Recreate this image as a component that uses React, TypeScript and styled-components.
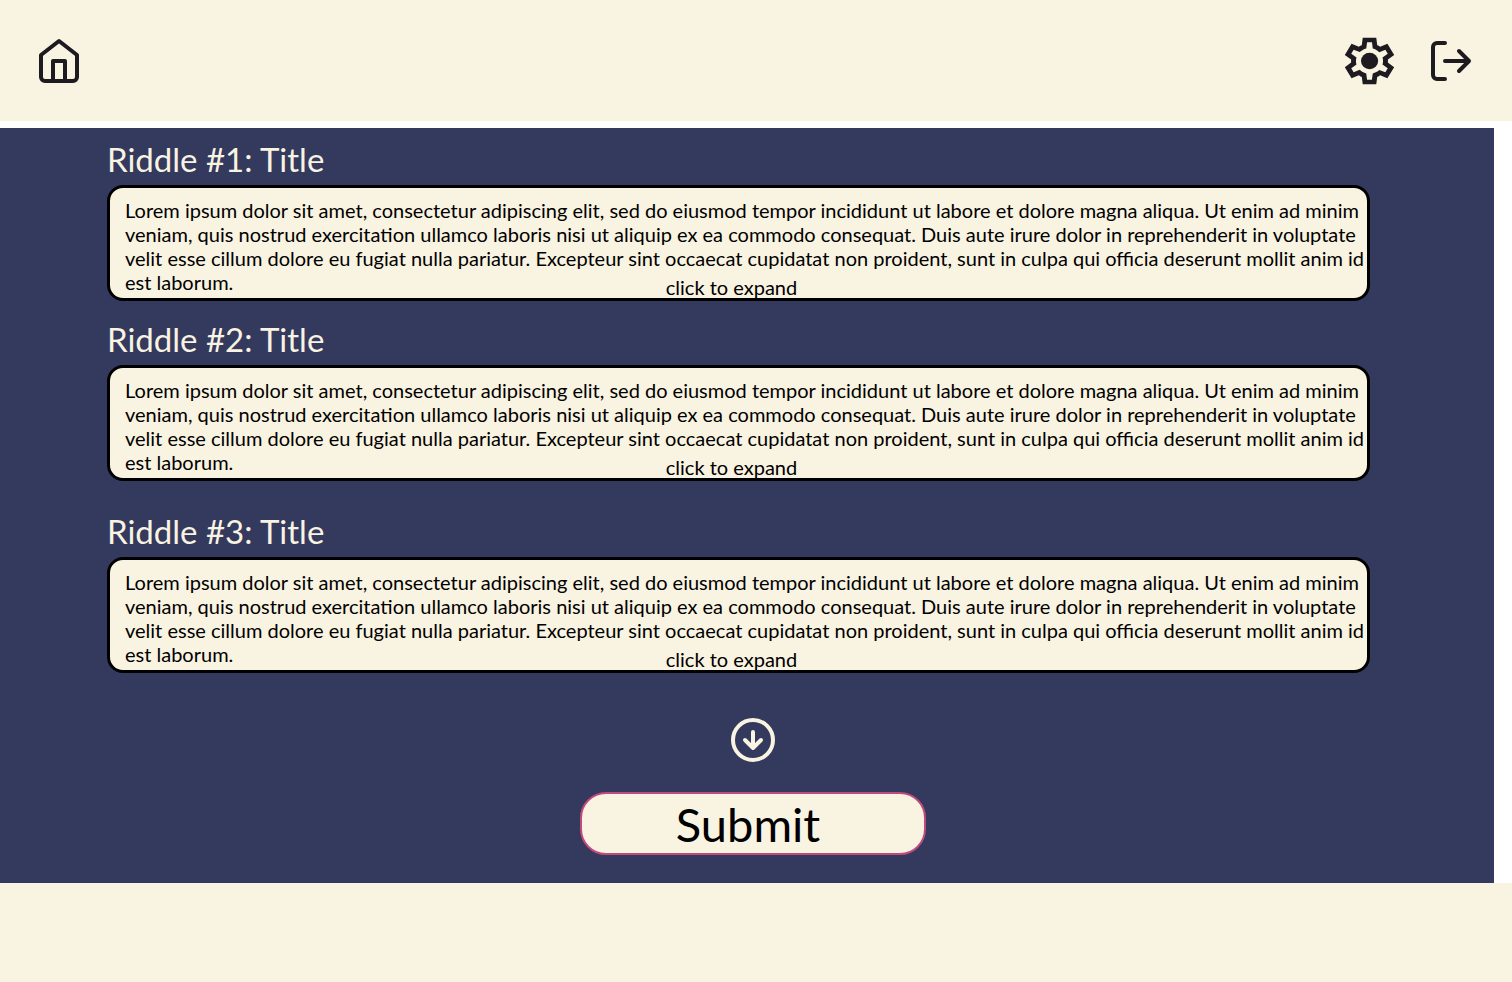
import React from "react";
import styled, { createGlobalStyle } from "styled-components";

const cream = "#f9f3e1";
const navy = "#34395e";
const ink = "#1d1b20";

const GlobalStyle = createGlobalStyle`
  *, *::before, *::after { box-sizing: border-box; }
  body {
    margin: 0;
    background: #ffffff;
    color: #000000;
    font-family: Lato, "Noto Sans", sans-serif;
  }
`;

const Page = styled.div`
  display: flex;
  flex-direction: column;
  min-height: 100vh;
`;

const Header = styled.header`
  display: flex;
  align-items: center;
  justify-content: space-between;
  height: 121px;
  padding: 0 36px 0 35px;
  background: ${cream};
`;

const HeaderActions = styled.div`
  display: flex;
  align-items: center;
  gap: 29px;
`;

const HomeLink = styled.a`
  display: flex;
  color: ${ink};
`;

const IconButton = styled.button<{ $color: string }>`
  display: flex;
  padding: 0;
  border: 0;
  background: none;
  color: ${(p) => p.$color};
  cursor: pointer;
`;

const Main = styled.main`
  margin: 7px 18px 0 0;
  padding: 11px 0 28px;
  background: ${navy};
`;

const RiddleList = styled.div`
  padding: 0 124px 0 107px;
`;

const Riddle = styled.section<{ $gap: number }>`
  margin-top: ${(p) => p.$gap}px;
`;

const RiddleTitle = styled.h2`
  margin: 0 0 6px;
  color: ${cream};
  font-size: 33px;
  line-height: 40px;
  font-weight: 400;
`;

const RiddleCard = styled.div`
  position: relative;
  min-height: 116px;
  padding: 10px 0 0 15px;
  border: 3px solid #000000;
  border-radius: 16px;
  background: ${cream};
`;

const RiddleText = styled.p`
  margin: 0;
  font-size: 20px;
  line-height: 24px;
  white-space: pre-line;
`;

const ExpandButton = styled.button`
  position: absolute;
  left: 0;
  right: 14px;
  bottom: -1px;
  width: max-content;
  margin: 0 auto;
  padding: 0;
  border: 0;
  background: none;
  color: inherit;
  font: inherit;
  font-size: 20px;
  line-height: 24px;
  cursor: pointer;
`;

const Actions = styled.div`
  display: flex;
  flex-direction: column;
  align-items: center;
  gap: 28px;
  margin-top: 43px;
  padding-left: 12px;
`;

const SubmitButton = styled.button`
  width: 346px;
  height: 63px;
  padding: 0 10px 0 0;
  border: 2px solid #c04a7c;
  border-radius: 26px;
  background: ${cream};
  color: #000000;
  font-family: inherit;
  font-size: 47px;
  line-height: 56px;
  cursor: pointer;
`;

const Footer = styled.footer`
  flex: 1;
  min-height: 99px;
  background: ${cream};
`;

const HomeIcon = () => (
  <svg width="48" height="48" viewBox="0 0 48 48" fill="none" stroke="currentColor" strokeWidth="4" strokeLinejoin="round" aria-hidden="true">
    <path d="M6 18 24 4l18 14v22a4 4 0 0 1-4 4H10a4 4 0 0 1-4-4Z" />
    <path d="M18 44V24h12v20" />
  </svg>
);

const SettingsIcon = () => (
  <svg width="59" height="56" viewBox="0 -960 960 960" preserveAspectRatio="none" fill="currentColor" aria-hidden="true">
    <path d="m370-80-16-128q-13-5-24.500-12T307-235l-119 50L78-375l103-78q-1-7-1-13.500v-27q0-6.500 1-13.500L78-585l110-190 119 50q11-8 23-15t24-12l16-128h220l16 128q13 5 24.500 12t22.500 15l119-50 110 190-103 78q1 7 1 13.500v27q0 6.500-2 13.500l103 78-110 190-118-50q-11 8-23 15t-24 12L590-80H370Zm70-80h79l14-106q31-8 57.500-23.500T639-327l99 41 39-68-86-65q5-14 7-29.500t2-31.500q0-16-2-31.500t-7-29.500l86-65-39-68-99 42q-22-23-48.500-38.500T533-694l-13-106h-79l-14 106q-31 8-57.500 23.500T321-633l-99-41-39 68 86 64q-5 15-7 30t-2 32q0 16 2 31t7 30l-86 65 39 68 99-42q22 23 48.500 38.500T427-266l13 106Z" />
    <circle cx="481" cy="-480" r="140" />
  </svg>
);

const LogoutIcon = () => (
  <svg width="48" height="48" viewBox="0 0 48 48" fill="none" stroke="currentColor" strokeWidth="4" strokeLinecap="round" strokeLinejoin="round" aria-hidden="true">
    <path d="M17 6H9a4 4 0 0 0-4 4v28a4 4 0 0 0 4 4h8" />
    <path d="M17 24h24M31 14l10 10-10 10" />
  </svg>
);

const DownIcon = () => (
  <svg width="48" height="48" viewBox="0 0 24 24" fill="none" stroke="currentColor" strokeWidth="2" strokeLinecap="round" strokeLinejoin="round" aria-hidden="true">
    <circle cx="12" cy="12" r="10" />
    <path d="M12 8v8M8 12l4 4 4-4" />
  </svg>
);

const body = `Lorem ipsum dolor sit amet, consectetur adipiscing elit, sed do eiusmod tempor incididunt ut labore et dolore magna aliqua. Ut enim ad minim
veniam, quis nostrud exercitation ullamco laboris nisi ut aliquip ex ea commodo consequat. Duis aute irure dolor in reprehenderit in voluptate
velit esse cillum dolore eu fugiat nulla pariatur. Excepteur sint occaecat cupidatat non proident, sunt in culpa qui officia deserunt mollit anim id
est laborum.`;

const riddles = [
  { title: "Riddle #1: Title", gap: 0 },
  { title: "Riddle #2: Title", gap: 18 },
  { title: "Riddle #3: Title", gap: 30 },
];

export default function App() {
  return (
    <Page>
      <GlobalStyle />
      <Header>
        <HomeLink href="#home" aria-label="Home">
          <HomeIcon />
        </HomeLink>
        <HeaderActions>
          <IconButton type="button" $color={ink} aria-label="Settings">
            <SettingsIcon />
          </IconButton>
          <IconButton type="button" $color={ink} aria-label="Log out">
            <LogoutIcon />
          </IconButton>
        </HeaderActions>
      </Header>
      <Main>
        <RiddleList>
          {riddles.map((riddle) => (
            <Riddle key={riddle.title} $gap={riddle.gap}>
              <RiddleTitle>{riddle.title}</RiddleTitle>
              <RiddleCard>
                <RiddleText>{body}</RiddleText>
                <ExpandButton type="button">click to expand</ExpandButton>
              </RiddleCard>
            </Riddle>
          ))}
        </RiddleList>
        <Actions>
          <IconButton type="button" $color={cream} aria-label="Next riddles">
            <DownIcon />
          </IconButton>
          <SubmitButton type="submit">Submit</SubmitButton>
        </Actions>
      </Main>
      <Footer />
    </Page>
  );
}
